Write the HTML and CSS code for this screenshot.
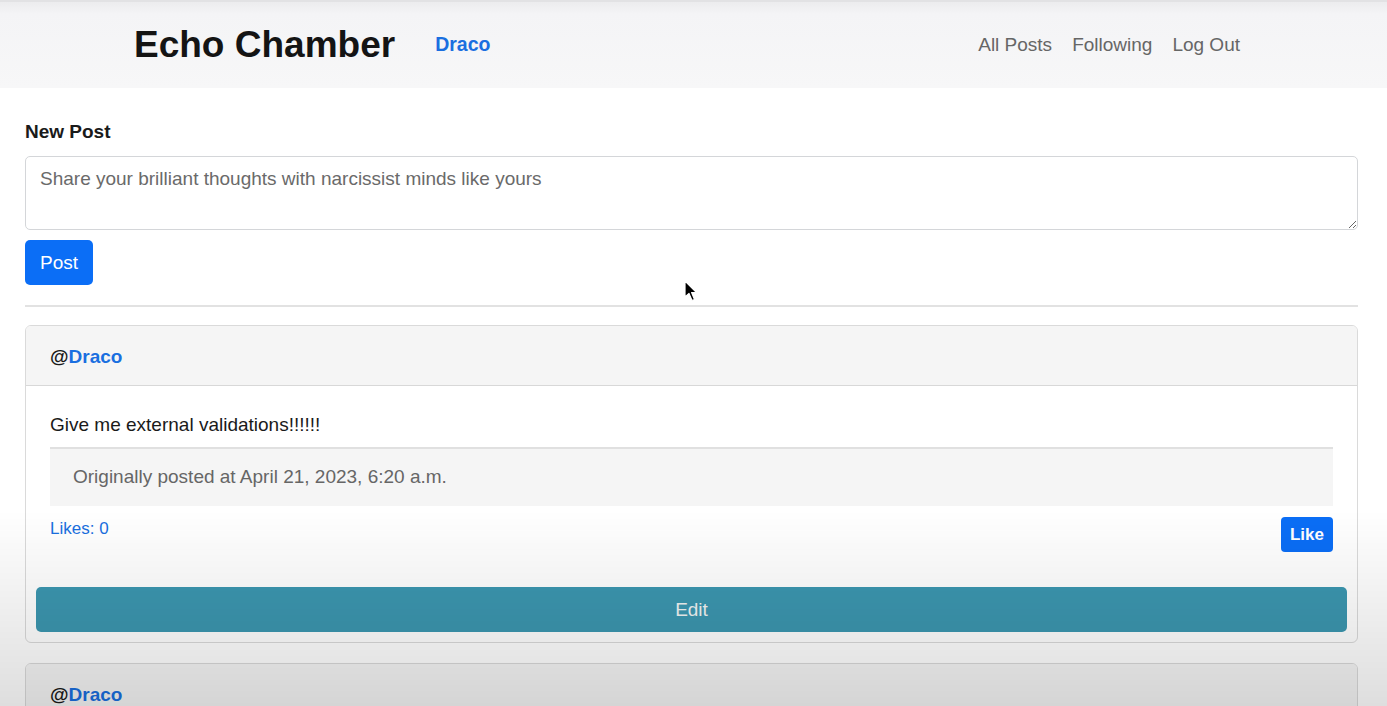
FILE: index.html
```html
<!DOCTYPE html>
<html lang="en">
<head>
<meta charset="utf-8">
<title>Echo Chamber</title>
<link rel="stylesheet" href="styles.css">
</head>
<body>
<nav class="navbar">
  <a class="brand" href="#">Echo Chamber</a>
  <a class="user-link" href="#">Draco</a>
  <div class="nav-links">
    <a href="#">All Posts</a>
    <a href="#">Following</a>
    <a href="#">Log Out</a>
  </div>
</nav>
<main class="main">
  <form class="new-post">
    <label class="label" for="content">New Post</label>
    <textarea id="content" class="textarea" placeholder="Share your brilliant thoughts with narcissist minds like yours"></textarea>
    <button type="button" class="btn btn-primary btn-post">Post</button>
  </form>
  <hr class="divider">
  <section class="card">
    <div class="card-header">@<a href="#" class="author">Draco</a></div>
    <div class="card-body">
      <p class="post-text">Give me external validations!!!!!!</p>
      <div class="meta">Originally posted at April 21, 2023, 6:20 a.m.</div>
      <div class="likes-row">
        <a href="#" class="likes">Likes: 0</a>
        <button type="button" class="btn btn-primary btn-like">Like</button>
      </div>
    </div>
    <button type="button" class="btn btn-edit">Edit</button>
  </section>
  <section class="card">
    <div class="card-header">@<a href="#" class="author">Draco</a></div>
    <div class="card-body">
      <p class="post-text">Second post</p>
    </div>
  </section>
</main>
<div class="cursor" aria-hidden="true">
  <svg width="14" height="22" viewBox="0 0 14 22"><path d="M1 1 L1 17 L5 13.5 L8 20.5 L10.5 19.5 L7.6 12.6 L12.5 12.6 Z" fill="#000" stroke="#fff" stroke-width="1.2" stroke-linejoin="round"/></svg>
</div>
</body>
</html>
```

FILE: styles.css
```css
* { box-sizing: border-box; }
html, body { height: 100%; }
body {
  margin: 0;
  font-family: "Liberation Sans", Arial, sans-serif;
  font-size: 19px;
  line-height: 1.5;
  color: #1a1a1a;
  background: #fff;
  overflow: hidden;
}
body::after {
  content: "";
  position: fixed;
  inset: 0;
  pointer-events: none;
  background: linear-gradient(to bottom, rgba(0,0,0,0) 0, rgba(0,0,0,0) 510px, rgba(0,0,0,0.06) 600px, rgba(0,0,0,0.13) 706px);
}
a { text-decoration: none; }

.navbar {
  height: 88px;
  display: flex;
  align-items: center;
  padding: 0 147px 0 134px;
  background: linear-gradient(to bottom, #ececee 0, #f4f4f6 12px, #f7f7f8 100%);
  border-top: 2px solid #e2e2e4;
}
.brand {
  font-size: 37px;
  font-weight: 700;
  color: #141414;
}
.user-link {
  margin-left: 40px;
  font-weight: 700;
  font-size: 19.5px;
  color: #1a6fe0;
}
.nav-links {
  margin-left: auto;
  display: flex;
  gap: 20px;
}
.nav-links a {
  color: #666;
  font-size: 19px;
}

.main {
  padding: 30px 29px 0 25px;
}
.new-post { display: flex; flex-direction: column; align-items: flex-start; }
.label {
  font-weight: 700;
  line-height: 28px;
  margin-bottom: 10px;
}
.textarea {
  display: block;
  width: 100%;
  height: 74px;
  border: 1px solid #d4d6d9;
  border-radius: 5px;
  padding: 8px 14px;
  font-family: inherit;
  font-size: 19px;
  line-height: 28px;
  color: #333;
  resize: vertical;
}
.textarea::placeholder { color: #6a6a6a; }

.btn {
  border: 0;
  font-family: inherit;
  cursor: pointer;
}
.btn-primary {
  background: #0b6ef6;
  color: #fff;
}
.btn-post {
  margin-top: 10px;
  height: 45px;
  padding: 0 15px;
  font-size: 19px;
  border-radius: 5px;
}

.divider {
  margin: 20px 0 18px;
  border: 0;
  border-top: 2px solid #e2e2e2;
}

.card {
  border: 1px solid #dadada;
  border-radius: 6px;
  margin-bottom: 20px;
  display: flex;
  flex-direction: column;
  overflow: hidden;
}
.card-header {
  height: 60px;
  display: flex;
  align-items: center;
  padding: 3px 24px 0;
  background: #f5f5f5;
  border-bottom: 1px solid #d8d8d8;
  font-weight: 700;
  color: #1a1a1a;
}
.author { color: #1a6fe0; }
.card-body {
  padding: 24px 24px 25px;
}
.post-text {
  margin: 0 0 8px;
  line-height: 29px;
}
.meta {
  border-top: 2px solid #e0e0e0;
  background: #f5f5f5;
  padding: 14px 23px 15px;
  line-height: 28px;
  color: #666;
}
.likes-row {
  margin-top: 11px;
  display: flex;
  justify-content: space-between;
  align-items: flex-start;
}
.likes {
  font-size: 17px;
  line-height: 24px;
  color: #1a6fe0;
}
.btn-like {
  height: 35px;
  padding: 0 9px;
  font-size: 17px;
  font-weight: 700;
  border-radius: 4px;
}
.btn-edit {
  margin: 10px 10px 10px;
  height: 45px;
  border-radius: 5px;
  background: #3c97b0;
  color: #f2f4f4;
  font-size: 19px;
}

.cursor {
  position: fixed;
  left: 684px;
  top: 280px;
  width: 14px;
  height: 22px;
}
```
